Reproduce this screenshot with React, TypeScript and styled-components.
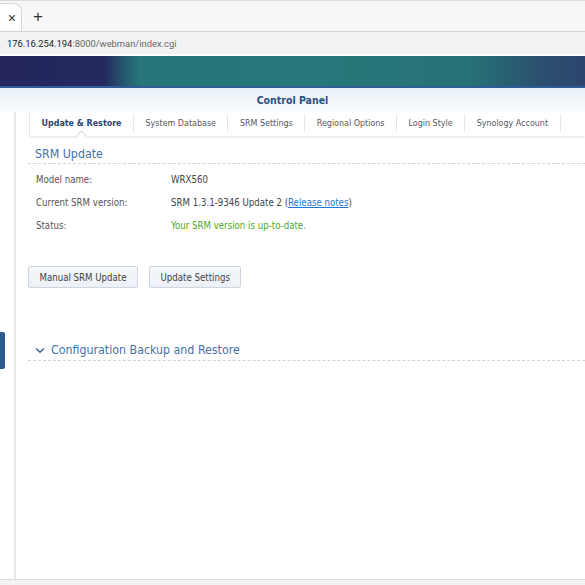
import styled, { createGlobalStyle } from "styled-components";

const GlobalStyle = createGlobalStyle`
  html, body {
    margin: 0;
    padding: 0;
    background: #ffffff;
  }
  body {
    font-family: "DejaVu Sans Condensed", "DejaVu Sans", sans-serif;
    font-stretch: condensed;
  }
  * {
    box-sizing: border-box;
  }
`;

const Page = styled.div`
  width: 585px;
  height: 585px;
  display: flex;
  flex-direction: column;
  overflow: hidden;
`;

const TabStrip = styled.div`
  height: 32px;
  display: flex;
  align-items: flex-end;
  background: #f7f7f7;
  border-top: 1px solid #dcdcdc;
  border-bottom: 1px solid #d3d3d3;
`;

const BrowserTab = styled.div`
  width: 22px;
  height: 28px;
  background: #ffffff;
  border: 1px solid #d8d8d8;
  border-bottom: none;
  border-left: none;
  border-radius: 0 8px 0 0;
  display: flex;
  align-items: center;
  justify-content: flex-end;
  padding-right: 5px;
  color: #333;
  font-family: "Liberation Sans", sans-serif;
  font-size: 14px;
`;

const NewTab = styled.div`
  width: 32px;
  height: 28px;
  display: flex;
  align-items: center;
  justify-content: center;
  font-family: "Liberation Sans", sans-serif;
  font-size: 17px;
  color: #333;
`;

const AddressBar = styled.div`
  height: 24px;
  background: #f1f2f4;
  border-bottom: 2px solid #ffffff;
  display: flex;
  align-items: center;
  padding: 1px 0 0 7px;
  font-family: Roboto, "Noto Sans", sans-serif;
  font-stretch: normal;
  font-size: 9.4px;
  color: #666;
`;

const Host = styled.span`
  color: #222;
`;

const Banner = styled.div`
  height: 32px;
  background: linear-gradient(
    90deg,
    #23245c 0%,
    #242a60 18%,
    #25566e 21%,
    #26767a 24%,
    #27787a 55%,
    #267276 80%,
    #2b4e6e 93%,
    #2d456e 100%
  );
  border-bottom: 2px solid #2e5c98;
`;

const WindowHeader = styled.div`
  height: 24px;
  display: flex;
  align-items: center;
  justify-content: center;
  background: linear-gradient(#e9eff7, #f9fbfd);
  color: #2b4f80;
  font-weight: bold;
  font-size: 10.5px;
`;

const Body = styled.div`
  flex: 1;
  display: flex;
  min-height: 0;
`;

const Sidebar = styled.div`
  width: 16px;
  border-right: 2px solid #e6e6e6;
  padding-top: 220px;
`;

const SideMarker = styled.div`
  width: 5px;
  height: 37px;
  background: #2c5a8e;
  border-radius: 0 2px 2px 0;
`;

const Main = styled.div`
  flex: 1;
  padding-left: 12px;
  min-width: 0;
`;

const TabBar = styled.div`
  height: 24px;
  margin-left: 1px;
  display: flex;
  border-left: 1px solid #e3e6ea;
  box-shadow: 0 2px 2px -1px rgba(0, 0, 0, 0.12);
  position: relative;
`;

const Tab = styled.div<{ $active?: boolean }>`
  position: relative;
  display: flex;
  align-items: center;
  padding: 0 11.5px 0 11.5px;
  margin: 2px 0 4px;
  border-right: 1px solid #e3e6ea;
  font-size: 8.9px;
  white-space: nowrap;
  color: ${(p) => (p.$active ? "#2b466e" : "#555a60")};
  font-weight: ${(p) => (p.$active ? "bold" : "normal")};
`;

const Notch = styled.span`
  position: absolute;
  left: 50%;
  bottom: -7px;
  width: 7px;
  height: 7px;
  margin-left: -4px;
  background: #ffffff;
  border-left: 1px solid #d8dce2;
  border-top: 1px solid #d8dce2;
  transform: rotate(45deg);
`;

const SectionTitle = styled.div`
  margin-top: 10px;
  padding: 0 7px 0;
  height: 18px;
  line-height: 16px;
  font-size: 12.3px;
  color: #4672a4;
  border-bottom: 1px dashed #d0d4d8;
`;

const InfoList = styled.div`
  padding: 4px 0 0 8px;
`;

const InfoRow = styled.div`
  height: 23px;
  display: flex;
  align-items: center;
  font-size: 9.6px;
`;

const Label = styled.span`
  width: 135px;
  color: #555;
`;

const Value = styled.span<{ $ok?: boolean }>`
  color: ${(p) => (p.$ok ? "#4ca82e" : "#444")};
`;

const Link = styled.a`
  color: #1c7ad6;
  text-decoration: underline;
`;

const ButtonRow = styled.div`
  margin-top: 29px;
  display: flex;
  gap: 11px;
`;

const Button = styled.button`
  height: 22px;
  padding: 0 10.5px;
  background: linear-gradient(#f5f7fa, #edf1f5);
  border: 1px solid #cdd6e0;
  border-radius: 2px;
  font-family: inherit;
  font-stretch: condensed;
  font-size: 9.6px;
  color: #444;
`;

const Collapsible = styled.div`
  margin-top: 52px;
  height: 21px;
  display: flex;
  align-items: center;
  gap: 6px;
  padding-left: 7px;
  font-size: 12.3px;
  color: #4672a4;
  border-bottom: 1px dashed #d0d4d8;
`;

const StatusBar = styled.div`
  height: 6px;
  border-top: 1px solid #dcdcdc;
  background: #f3f3f3;
`;

function Chevron() {
  return (
    <svg width="10" height="7" viewBox="0 0 10 7">
      <path d="M1 1.5 L5 5.2 L9 1.5" fill="none" stroke="#3f6ea2" strokeWidth="1.6" />
    </svg>
  );
}

const tabs = [
  "Update & Restore",
  "System Database",
  "SRM Settings",
  "Regional Options",
  "Login Style",
  "Synology Account",
];

export default function App() {
  return (
    <>
      <GlobalStyle />
      <Page>
        <TabStrip>
          <BrowserTab>×</BrowserTab>
          <NewTab>+</NewTab>
        </TabStrip>
        <AddressBar>
          <Host>176.16.254.194</Host>:8000/webman/index.cgi
        </AddressBar>
        <Banner />
        <WindowHeader>Control Panel</WindowHeader>
        <Body>
          <Sidebar>
            <SideMarker />
          </Sidebar>
          <Main>
            <TabBar>
              {tabs.map((t, i) => (
                <Tab key={t} $active={i === 0}>
                  {t}
                  {i === 0 && <Notch />}
                </Tab>
              ))}
            </TabBar>
            <SectionTitle>SRM Update</SectionTitle>
            <InfoList>
              <InfoRow>
                <Label>Model name:</Label>
                <Value>WRX560</Value>
              </InfoRow>
              <InfoRow>
                <Label>Current SRM version:</Label>
                <Value>
                  SRM 1.3.1-9346 Update 2 (<Link href="#">Release notes</Link>)
                </Value>
              </InfoRow>
              <InfoRow>
                <Label>Status:</Label>
                <Value $ok>Your SRM version is up-to-date.</Value>
              </InfoRow>
            </InfoList>
            <ButtonRow>
              <Button>Manual SRM Update</Button>
              <Button>Update Settings</Button>
            </ButtonRow>
            <Collapsible>
              <Chevron />
              Configuration Backup and Restore
            </Collapsible>
          </Main>
        </Body>
        <StatusBar />
      </Page>
    </>
  );
}
